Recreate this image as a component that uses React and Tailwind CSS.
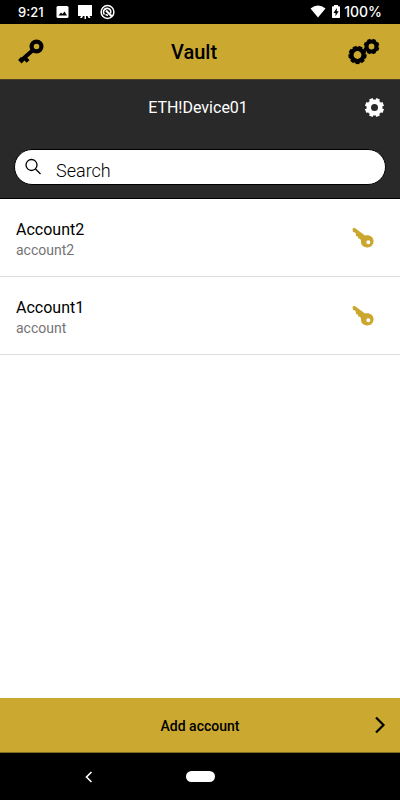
import React from "react";

const accounts = [
  { name: "Account2", user: "account2" },
  { name: "Account1", user: "account" },
];

function Gear({ cx, cy, body, hole, teeth, reach }) {
  const mid = (body + hole) / 2;
  return (
    <g transform={`translate(${cx} ${cy})`} fill="none" stroke="currentColor">
      <circle r={mid} strokeWidth={body - hole} />
      {Array.from({ length: teeth }, (_, i) => (
        <path
          key={i}
          d={`M0 ${-(mid + 0.5)}V${-reach}`}
          strokeWidth={body * 0.48}
          transform={`rotate(${(i * 360) / teeth + 180 / teeth})`}
        />
      ))}
    </g>
  );
}

function StatusBar() {
  return (
    <div className="flex h-6 items-center justify-between bg-black pl-[18px] pr-[18px] text-white">
      <div className="flex items-center">
        <span className="w-[38px] font-['Inter',sans-serif] text-[13px] leading-6 font-medium">9:21</span>
        <svg className="h-6 w-[60px]" viewBox="0 0 60 24" aria-hidden="true">
          <rect x="0.5" y="6" width="12" height="12" rx="1.5" fill="white" />
          <path d="M2.5 15.5L5 12.500L6.500 14L8.500 11.500L11 15.500Z" fill="black" />
          <path d="M22 5H36V16H22ZM25 16H27L26 18H24ZM28.500 16H30V19H28.500ZM31.500 16H33.500L34.500 18H32.500Z" fill="white" />
          <g fill="none" stroke="white">
            <circle cx="51.500" cy="12" r="6.400" strokeWidth="1.500" />
            <path d="M48.500 14.500A3.700 3.700 0 0 1 54 9.500A3.700 3.700 0 0 1 54.500 13.500" strokeWidth="1.700" />
            <path d="M50 10.500L56 16.500" strokeWidth="2.200" />
            <path d="M49.500 14.500L52 15.500" strokeWidth="1.500" />
          </g>
        </svg>
      </div>
      <div className="flex items-center">
        <svg className="h-6 w-[34px]" viewBox="0 0 34 24" aria-hidden="true">
          <path d="M0.500 8.500Q8 2.500 15.500 8.500L8 17.500Z" fill="white" />
          <path d="M22 7Q22 6.300 22.700 6.300H24V5H28V6.300H29.300Q30 6.300 30 7V17.300Q30 18 29.300 18H22.700Q22 18 22 17.300Z" fill="white" />
          <path d="M26.800 8L23.500 13H25.500V16.300L28.700 11.300H26.800Z" fill="black" />
        </svg>
        <span className="font-['Inter',sans-serif] text-sm leading-6 font-medium">100%</span>
      </div>
    </div>
  );
}

function AccountKey() {
  return (
    <svg className="h-6 w-6" viewBox="0 0 24 24" aria-hidden="true">
      <path
        fillRule="evenodd"
        fill="#cba72f"
        d="M3.500 1.800L14 9.500C18 8.200 22.600 10.500 22.600 15.300C22.600 19 19.500 21.800 16 21.500C12 21.200 9.500 18.500 10 14.500L9 12.800L7.500 12.800L6.800 10.500L5 10L4.800 7.500L3.500 6.300L2 6L1.500 2.800ZM17.300 14.300A2 2 0 1 0 17.300 18.300A2 2 0 1 0 17.300 14.300Z"
      />
    </svg>
  );
}

export default function App() {
  return (
    <div className="flex min-h-screen flex-col bg-white font-['Roboto',sans-serif] text-black">
      <StatusBar />
      <header className="flex h-14 items-center border-b border-[#4a4022] bg-[#cba931]">
        <button className="flex w-[52px] justify-end pr-2" aria-label="Keys">
          <svg className="h-7 w-7" viewBox="0 0 28 28" aria-hidden="true">
            <g fill="none" stroke="currentColor">
              <circle cx="20.500" cy="8.500" r="4.900" strokeWidth="4.200" />
              <path d="M16.500 12.500L4.500 23" strokeWidth="4" />
              <path d="M3.500 20.500L7 24M8 19L12 23.500" strokeWidth="4" />
            </g>
          </svg>
        </button>
        <h1 className="flex-1 pt-px text-center text-xl leading-7 font-medium">Vault</h1>
        <button className="flex w-16 justify-end pr-4" aria-label="Preferences">
          <svg className="h-8 w-9" viewBox="0 0 36 32" aria-hidden="true">
            <Gear cx={9.5} cy={19} body={8.3} hole={3.900} teeth={9} reach={9.100} />
            <Gear cx={23.500} cy={10.500} body={7} hole={2.900} teeth={8} reach={7.800} />
          </svg>
        </button>
      </header>

      <section className="border-b border-black bg-[#292929] px-3.5 pb-[13px] text-white">
        <div className="flex h-14 items-center">
          <h2 className="flex-1 pl-[17px] text-center text-base leading-6">ETH!Device01</h2>
          <button className="w-[21px]" aria-label="Device settings">
            <svg className="h-5 w-5" viewBox="0 0 20 20" aria-hidden="true">
              <Gear cx={9.500} cy={9.500} body={8} hole={3.500} teeth={8} reach={9.500} />
            </svg>
          </button>
        </div>
        <label className="mt-[13px] flex h-9 items-center rounded-full border border-black bg-white pl-2.5 text-black">
          <svg className="h-5 w-5" viewBox="0 0 20 20" fill="none" stroke="currentColor" strokeWidth="1.300" aria-hidden="true">
            <circle cx="6.500" cy="8" r="5.500" />
            <path d="M10.500 12L15.500 17" />
          </svg>
          <input
            type="search"
            aria-label="Search"
            placeholder="Search"
            className="ml-[11px] min-w-0 flex-1 bg-transparent pt-2 text-lg leading-6 font-light outline-none placeholder:text-black"
          />
        </label>
      </section>

      <ul className="flex-1">
        {accounts.map((a) => (
          <li key={a.name} className="flex h-[78px] items-center justify-between border-b border-[#dedede] pl-4 pr-[25px]">
            <div className="pt-1">
              <p className="text-base leading-5">{a.name}</p>
              <p className="text-sm leading-5 text-[#747474]">{a.user}</p>
            </div>
            <button aria-label={`Open ${a.name}`}>
              <AccountKey />
            </button>
          </li>
        ))}
      </ul>

      <button className="flex h-[55px] items-center border-b border-[#806a20] bg-[#cba931] pr-2.5">
        <span className="flex-1 pl-[30px] pt-px text-center text-sm leading-5 font-medium">Add account</span>
        <svg className="h-5 w-5" viewBox="0 0 20 20" fill="none" stroke="currentColor" strokeWidth="2.200" aria-hidden="true">
          <path d="M6 2.500L13.500 10L6 17.500" />
        </svg>
      </button>

      <nav className="grid h-[47px] grid-cols-[1fr_29px_1fr] items-center bg-black">
        <button className="flex justify-end pr-[91px]" aria-label="Back">
          <svg className="h-3 w-3" viewBox="0 0 12 12" fill="none" stroke="white" strokeWidth="1.600" aria-hidden="true">
            <path d="M8.500 1L3.500 6L8.500 11" />
          </svg>
        </button>
        <button className="h-[11px] rounded-full bg-white" aria-label="Home" />
      </nav>
    </div>
  );
}
